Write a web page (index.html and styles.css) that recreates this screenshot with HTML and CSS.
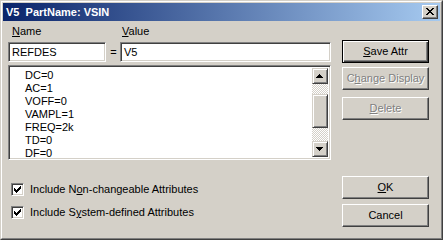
FILE: index.html
```html
<!DOCTYPE html>
<html>
<head>
<meta charset="utf-8">
<link rel="stylesheet" href="styles.css">
</head>
<body>
<div class="window">
  <div class="titlebar">
    <span class="title">V5&nbsp;&nbsp;PartName: VSIN</span>
    <span class="close">
      <svg width="8" height="7" viewBox="0 0 8 7" shape-rendering="crispEdges"><path d="M0 0h2v1h-2zM6 0h2v1h-2zM1 1h2v1h-2zM5 1h2v1h-2zM2 2h4v1h-4zM3 3h2v1h-2zM2 4h4v1h-4zM1 5h2v1h-2zM5 5h2v1h-2zM0 6h2v1h-2zM6 6h2v1h-2z" fill="#000"/></svg>
    </span>
  </div>
  <div class="content">
    <div class="leftcol">
      <div class="fields">
        <div class="label name-label"><u>N</u>ame</div>
        <div></div>
        <div class="label value-label"><u>V</u>alue</div>
        <div class="input">REFDES</div>
        <div class="eq">=</div>
        <div class="input">V5</div>
      </div>
      <div class="listbox">
        <div class="items">
          <div class="item">DC=0</div>
          <div class="item">AC=1</div>
          <div class="item">VOFF=0</div>
          <div class="item">VAMPL=1</div>
          <div class="item">FREQ=2k</div>
          <div class="item">TD=0</div>
          <div class="item">DF=0</div>
        </div>
        <div class="scrollbar">
          <div class="sbtn"><svg width="7" height="4" viewBox="0 0 7 4" shape-rendering="crispEdges"><path d="M3 0h1v1h-1zM2 1h3v1h-3zM1 2h5v1h-5zM0 3h7v1h-7z" fill="#000"/></svg></div>
          <div class="track"></div>
          <div class="thumb"></div>
          <div class="track track2"></div>
          <div class="sbtn"><svg width="7" height="4" viewBox="0 0 7 4" shape-rendering="crispEdges"><path d="M0 0h7v1h-7zM1 1h5v1h-5zM2 2h3v1h-3zM3 3h1v1h-1z" fill="#000"/></svg></div>
        </div>
      </div>
      <div class="checks">
        <label class="check"><span class="box"><svg width="7" height="7" viewBox="0 0 7 7" shape-rendering="crispEdges"><path d="M0 2h1v3h-1zM1 3h1v3h-1zM2 4h1v3h-1zM3 3h1v3h-1zM4 2h1v3h-1zM5 1h1v3h-1zM6 0h1v3h-1z" fill="#000"/></svg></span><span>Include N<u>o</u>n-changeable Attributes</span></label>
        <label class="check"><span class="box"><svg width="7" height="7" viewBox="0 0 7 7" shape-rendering="crispEdges"><path d="M0 2h1v3h-1zM1 3h1v3h-1zM2 4h1v3h-1zM3 3h1v3h-1zM4 2h1v3h-1zM5 1h1v3h-1zM6 0h1v3h-1z" fill="#000"/></svg></span><span>Include S<u>y</u>stem-defined Attributes</span></label>
      </div>
    </div>
    <div class="rightcol">
      <div class="btn default save"><span><u>S</u>ave Attr</span></div>
      <div class="btn disabled change"><span>C<u>h</u>ange Display</span></div>
      <div class="btn disabled delete"><span><u>D</u>elete</span></div>
      <div class="btn ok"><span><u>O</u>K</span></div>
      <div class="btn cancel"><span>Cancel</span></div>
    </div>
  </div>
</div>
</body>
</html>
```
FILE: styles.css
```css
html, body {
  margin: 0;
  padding: 0;
  background: #d4d0c8;
}
body {
  font-family: "Liberation Sans", Arial, sans-serif;
  font-size: 11px;
  color: #000;
}
.window {
  width: 443px;
  height: 240px;
  box-sizing: border-box;
  background: #d4d0c8;
  border-top: 1px solid #d4d0c8;
  border-left: 1px solid #d4d0c8;
  border-right: 1px solid #404040;
  border-bottom: 1px solid #404040;
  display: flex;
  flex-direction: column;
  position: relative;
}
.window::before {
  content: "";
  position: absolute;
  left: 0; top: 0; right: 0; bottom: 0;
  border-top: 1px solid #fff;
  border-left: 1px solid #fff;
  border-right: 1px solid #808080;
  border-bottom: 1px solid #808080;
  pointer-events: none;
}
.titlebar {
  margin: 2px 2px 0 2px;
  height: 18px;
  background: linear-gradient(to right, #0a246a, #a6caf0);
  display: flex;
  align-items: center;
  justify-content: space-between;
  padding: 0 2px 0 3px;
}
.title {
  color: #fff;
  font-weight: bold;
  font-size: 11px;
  line-height: 14px;
}
.close {
  width: 16px;
  height: 14px;
  box-sizing: border-box;
  background: #d4d0c8;
  border-top: 1px solid #fff;
  border-left: 1px solid #fff;
  border-right: 1px solid #404040;
  border-bottom: 1px solid #404040;
  box-shadow: inset -1px -1px 0 #808080;
  display: flex;
  align-items: center;
  justify-content: center;
  padding: 0 1px 1px 0;
}
.content {
  flex: 1;
  display: flex;
  padding: 0 0 0 7px;
}
.leftcol {
  width: 323px;
  display: flex;
  flex-direction: column;
}
.fields {
  display: grid;
  grid-template-columns: 98px 14px 211px;
  grid-template-rows: 21px 20px;
}
.label {
  padding-top: 4px;
  line-height: 13px;
}
.name-label { padding-left: 4px; }
.value-label { padding-left: 2px; }
.input {
  background: #fff;
  box-sizing: border-box;
  border-top: 1px solid #808080;
  border-left: 1px solid #808080;
  border-right: 1px solid #fff;
  border-bottom: 1px solid #fff;
  box-shadow: inset 1px 1px 0 #404040, inset -1px -1px 0 #d4d0c8;
  padding: 3px 3px 0 3px;
  line-height: 13px;
}
.eq {
  text-align: center;
  line-height: 20px;
  padding-left: 1px;
}
.listbox {
  margin-top: 3px;
  height: 95px;
  box-sizing: border-box;
  background: #fff;
  border-top: 1px solid #808080;
  border-left: 1px solid #808080;
  border-right: 1px solid #fff;
  border-bottom: 1px solid #fff;
  box-shadow: inset 1px 1px 0 #404040, inset -1px -1px 0 #d4d0c8;
  padding: 2px 2px 2px 2px;
  display: flex;
}
.items {
  flex: 1;
  padding: 1px 0 0 14px;
}
.item {
  line-height: 13px;
  height: 13px;
}
.scrollbar {
  width: 16px;
  display: flex;
  flex-direction: column;
}
.sbtn, .thumb {
  box-sizing: border-box;
  background: #d4d0c8;
  border-top: 1px solid #d4d0c8;
  border-left: 1px solid #d4d0c8;
  border-right: 1px solid #404040;
  border-bottom: 1px solid #404040;
  box-shadow: inset 1px 1px 0 #fff, inset -1px -1px 0 #808080;
}
.sbtn {
  height: 16px;
  display: flex;
  align-items: center;
  justify-content: center;
  padding-right: 1px;
}
.thumb {
  height: 34px;
}
.track {
  height: 10px;
  background: repeating-conic-gradient(#d4d0c8 0 25%, #fff 0 50%) 0 0 / 2px 2px;
}
.track2 {
  flex: 1;
}
.checks {
  margin-top: 23px;
  display: flex;
  flex-direction: column;
  gap: 10px;
}
.check {
  display: flex;
  align-items: center;
  gap: 6px;
  padding-left: 3px;
  height: 13px;
  line-height: 13px;
}
.box {
  width: 13px;
  height: 13px;
  box-sizing: border-box;
  background: #fff;
  border-top: 1px solid #808080;
  border-left: 1px solid #808080;
  border-right: 1px solid #fff;
  border-bottom: 1px solid #fff;
  box-shadow: inset 1px 1px 0 #404040, inset -1px -1px 0 #d4d0c8;
  display: flex;
  align-items: center;
  justify-content: center;
}
.rightcol {
  margin-left: 11px;
  width: 87px;
  display: flex;
  flex-direction: column;
}
.btn {
  height: 23px;
  box-sizing: border-box;
  background: #d4d0c8;
  border-top: 1px solid #fff;
  border-left: 1px solid #fff;
  border-right: 1px solid #404040;
  border-bottom: 1px solid #404040;
  box-shadow: inset -1px -1px 0 #808080;
  display: flex;
  align-items: center;
  justify-content: center;
  line-height: 13px;
}
.btn.default {
  border: 1px solid #000;
  box-shadow: inset 1px 1px 0 #fff, inset -1px -1px 0 #404040, inset -2px -2px 0 #808080;
}
.btn.disabled {
  color: #808080;
  text-shadow: 1px 1px 0 #fff;
}
.save { margin-top: 19px; }
.change { margin-top: 4px; }
.delete { margin-top: 7px; }
.ok { margin-top: auto; }
.cancel { margin-top: 5px; margin-bottom: 12px; }
u { text-decoration: underline; text-underline-offset: 1px; }
```
